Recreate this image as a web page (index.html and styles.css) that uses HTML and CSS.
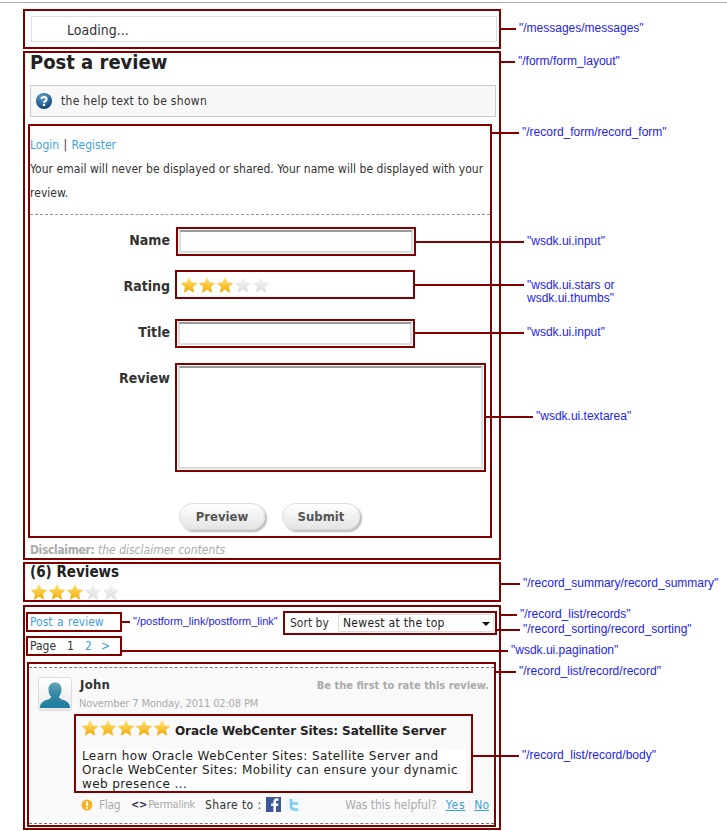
FILE: index.html
```html
<!DOCTYPE html>
<html lang="en">
<head>
  <meta charset="UTF-8">
  <title>Reviews widget layout</title>
  <link rel="stylesheet" href="styles.css">
</head>
<body>

<svg class="sprite" aria-hidden="true">
  <defs>
    <linearGradient id="goldFill" x1="0" y1="0" x2="0" y2="1">
      <stop offset="0" stop-color="#ffe680"/>
      <stop offset="1" stop-color="#f2a900"/>
    </linearGradient>
    <linearGradient id="greyFill" x1="0" y1="0" x2="0" y2="1">
      <stop offset="0" stop-color="#f6f6f6"/>
      <stop offset="1" stop-color="#dcdcdc"/>
    </linearGradient>
    <radialGradient id="helpFill" cx="0.4" cy="0.25" r="0.8">
      <stop offset="0" stop-color="#5aa0d0"/>
      <stop offset="1" stop-color="#0b3f70"/>
    </radialGradient>
    <linearGradient id="avatarFill" x1="0" y1="0" x2="0" y2="1">
      <stop offset="0" stop-color="#6aa5b8"/>
      <stop offset="0.5" stop-color="#2f87a5"/>
      <stop offset="1" stop-color="#1f7d9e"/>
    </linearGradient>
    <symbol id="starOn" viewBox="0 0 18 18">
      <path fill="url(#goldFill)" d="M9 .8L11.470 6.200 17.370 6.880 12.990 10.900 14.170 16.720 9 13.800 3.830 16.720 5.010 10.900 .63 6.880 6.530 6.200z"/>
    </symbol>
    <symbol id="starOff" viewBox="0 0 18 18">
      <path fill="url(#greyFill)" d="M9 .8L11.470 6.200 17.370 6.880 12.990 10.900 14.170 16.720 9 13.800 3.830 16.720 5.010 10.900 .63 6.880 6.530 6.200z"/>
    </symbol>
  </defs>
</svg>

<div class="top-rule"></div>

<div class="page">

  <!-- messages -->
  <div class="anno box-messages">
    <div class="loading">Loading...</div>
    <div class="callout callout-messages"><i></i><span>"/messages/messages"</span></div>
  </div>

  <!-- form layout -->
  <div class="anno box-form">
    <div class="callout callout-form"><i></i><span>"/form/form_layout"</span></div>
    <h1>Post a review</h1>
    <div class="help">
      <svg class="help-icon" viewBox="0 0 16 16">
        <circle cx="8" cy="8" r="8" fill="url(#helpFill)"/>
        <path d="M5.400 6a2.600 2.300 0 1 1 3.800 2.200c-.8.4-1.200.8-1.200 1.600" fill="none" stroke="#fff" stroke-width="2.100"/>
        <rect x="6.900" y="10.800" width="2.200" height="2.200" fill="#fff"/>
      </svg>
      the help text to be shown
    </div>

    <div class="anno box-record-form">
      <div class="callout callout-record-form"><i></i><span>"/record_form/record_form"</span></div>
      <div class="login"><a href="#">Login</a> | <a href="#">Register</a></div>
      <p class="notice">Your email will never be displayed or shared. Your name will be displayed with your review.</p>
      <div class="dash"></div>

      <div class="field field-name">
        <label>Name</label>
        <div class="anno box-input box-input-name">
          <input class="text-input" type="text">
          <div class="callout callout-name"><i></i><span>"wsdk.ui.input"</span></div>
        </div>
      </div>

      <div class="field field-rating">
        <label>Rating</label>
        <div class="anno box-input box-stars">
          <svg class="star"><use href="#starOn"/></svg><svg class="star"><use href="#starOn"/></svg><svg class="star"><use href="#starOn"/></svg><svg class="star"><use href="#starOff"/></svg><svg class="star"><use href="#starOff"/></svg>
          <div class="callout callout-rating"><i></i><span>"wsdk.ui.stars or<br>wsdk.ui.thumbs"</span></div>
        </div>
      </div>

      <div class="field field-title">
        <label>Title</label>
        <div class="anno box-input">
          <input class="text-input" type="text">
          <div class="callout callout-title"><i></i><span>"wsdk.ui.input"</span></div>
        </div>
      </div>

      <div class="field field-review">
        <label>Review</label>
        <div class="anno box-textarea">
          <textarea class="text-area"></textarea>
          <div class="callout callout-review"><i></i><span>"wsdk.ui.textarea"</span></div>
        </div>
      </div>

      <div class="buttons">
        <button class="pill pill-preview">Preview</button>
        <button class="pill pill-submit">Submit</button>
      </div>
    </div>

    <div class="disclaimer"><b>Disclaimer:</b> <em>the disclaimer contents</em></div>
  </div>

  <!-- summary -->
  <div class="anno box-summary">
    <div class="callout callout-summary"><i></i><span>"/record_summary/record_summary"</span></div>
    <h2>(6) Reviews</h2>
    <div class="stars-row"><svg class="star"><use href="#starOn"/></svg><svg class="star"><use href="#starOn"/></svg><svg class="star"><use href="#starOn"/></svg><svg class="star"><use href="#starOff"/></svg><svg class="star"><use href="#starOff"/></svg></div>
  </div>

  <!-- record list -->
  <div class="anno box-records">
    <div class="callout callout-records"><i></i><span>"/record_list/records"</span></div>

    <div class="records-head">
      <div class="head-left">
        <div class="anno box-postlink">
          <a href="#">Post a review</a>
          <div class="callout callout-postlink"><i></i><span>"/postform_link/postform_link"</span></div>
        </div>
        <div class="anno box-pages">
          <span class="page-word">Page</span><span class="page-no">1</span><a href="#">2</a><a href="#">&gt;</a>
          <div class="callout callout-pages"><i></i><span>"wsdk.ui.pagination"</span></div>
        </div>
      </div>
      <div class="anno box-sort">
        <span class="sort-word">Sort by</span>
        <div class="select">Newest at the top<b class="select-arrow"></b></div>
        <div class="callout callout-sort"><i></i><span>"/record_sorting/record_sorting"</span></div>
      </div>
    </div>

    <div class="anno box-record">
      <div class="callout callout-record"><i></i><span>"/record_list/record/record"</span></div>
      <div class="record-frame">
        <div class="record-content">
          <div class="record-top">
            <div class="avatar">
              <svg viewBox="0 0 30 30">
                <path fill="url(#avatarFill)" d="M0 29c0-5 3-7 8-8.500 2-.7 3-1.500 3-3-1.500-1.500-2.500-4-2.500-7C8.500 6 11 3.500 15 3.500s6.500 2.500 6.500 7c0 3-1 5.500-2.500 7 0 1.500 1 2.300 3 3 5 1.500 8 3.500 8 8.500z"/>
              </svg>
            </div>
            <div class="meta">
              <div class="author">John</div>
              <div class="date">November 7 Monday, 2011 02:08 PM</div>
            </div>
            <div class="first-rate">Be the first to rate this review.</div>
          </div>

          <div class="anno box-body">
            <div class="callout callout-body"><i></i><span>"/record_list/record/body"</span></div>
            <div class="body-head">
              <svg class="star"><use href="#starOn"/></svg><svg class="star"><use href="#starOn"/></svg><svg class="star"><use href="#starOn"/></svg><svg class="star"><use href="#starOn"/></svg><svg class="star"><use href="#starOn"/></svg>
              <strong>Oracle WebCenter Sites: Satellite Server</strong>
            </div>
            <p>Learn how Oracle WebCenter Sites: Satellite Server and Oracle WebCenter Sites: Mobility can ensure your dynamic web presence ...</p>
          </div>

          <div class="record-foot">
            <svg class="flag-icon" viewBox="0 0 12 12">
              <circle cx="6" cy="6" r="5.500" fill="#f5b324"/>
              <rect x="5" y="2.500" width="2" height="4.500" fill="#fff"/>
              <rect x="5" y="8" width="2" height="1.800" fill="#fff"/>
            </svg>
            <span class="flag">Flag</span>
            <span class="permalink"><b>&lt;&gt;</b>Permalink</span>
            <span class="share">Share to :</span>
            <svg class="social" viewBox="0 0 15 15">
              <rect width="15" height="15" fill="#3b5998"/>
              <path fill="#fff" d="M10 15V9h2l.4-2.500H10V5c0-.8.3-1.200 1.200-1.200h1.300V1.500C12 1.400 11.400 1.300 10.600 1.300 8.700 1.300 7.400 2.500 7.400 4.700v1.800H5.200V9h2.200v6z"/>
            </svg>
            <svg class="social social-tw" viewBox="0 0 15 15">
              <rect width="15" height="15" rx="3" fill="#eef7fb"/>
              <path fill="none" stroke="#7ccbef" stroke-width="2.600" d="M5 2v6.500c0 2.500 1.500 4 4 4h3M5 6.500h7"/>
            </svg>
            <span class="helpful">Was this helpful?</span>
            <a href="#" class="vote vote-yes">Yes</a>
            <a href="#" class="vote">No</a>
          </div>
        </div>
      </div>
    </div>
  </div>

</div>

</body>
</html>
```

FILE: styles.css
```css
body {
  margin: 0;
  background: #fff;
  font-family: "DejaVu Sans Condensed", "DejaVu Sans", sans-serif;
  font-size: 12px;
  color: #333;
}
a {
  color: #3f9fdc;
  text-decoration: none;
}
.sprite {
  position: absolute;
  width: 0;
  height: 0;
}
.top-rule {
  height: 1px;
  margin-top: 2px;
  background: #aaa;
}
.page {
  width: 478px;
  margin-left: 23px;
  display: flex;
  flex-direction: column;
}

/* dark red annotation frames */
.anno {
  position: relative;
  box-sizing: border-box;
  border: 2px solid #800000;
}
.callout {
  position: absolute;
  left: 100%;
  display: flex;
  align-items: center;
  gap: 3px;
  font-family: "Liberation Sans", Arial, sans-serif;
  font-size: 12px;
  line-height: 13px;
  color: #2222ee;
  white-space: nowrap;
}
.callout i {
  display: block;
  height: 2px;
  background: #800000;
}
.callout-messages { top: 11px; }
.callout-messages i { width: 17px; }
.callout-form { top: 2px; }
.callout-form i { width: 16px; }
.callout-record-form { top: 0; }
.callout-record-form i { width: 29px; }
.callout-name { top: 6px; }
.callout-name i { width: 110px; }
.callout-rating { top: 7px; align-items: flex-start; }
.callout-rating i { width: 111px; margin-top: 5px; }
.callout-title { top: 5px; }
.callout-title i { width: 111px; }
.callout-review { top: 45px; }
.callout-review i { width: 49px; }
.callout-summary { top: 13px; }
.callout-summary i { width: 21px; }
.callout-records { top: 1px; }
.callout-records i { width: 18px; }
.callout-sort { top: 10px; }
.callout-sort i { width: 25px; }
.callout-pages { top: 6px; }
.callout-pages i { width: 388px; }
.callout-record { top: 1px; }
.callout-record i { width: 22px; }
.callout-body { top: 33px; }
.callout-body i { width: 48px; }
.callout-postlink { top: 1px; font-size: 11px; }
.callout-postlink i { width: 10px; }

/* messages */
.box-messages {
  height: 40px;
  margin-top: 6px;
  padding: 5px 2px 0 6px;
}
.loading {
  height: 26px;
  box-sizing: border-box;
  border: 1px solid #dde0e0;
  padding-left: 35px;
  font-size: 14px;
  line-height: 26px;
}

/* form */
.box-form {
  height: 509px;
  margin-top: 2px;
  padding: 0 3px 0 5px;
}
h1 {
  margin: 0 0 14px;
  font-size: 20px;
  line-height: 18px;
  color: #222;
}
.help {
  display: flex;
  align-items: center;
  gap: 9px;
  height: 32px;
  box-sizing: border-box;
  border: 1px solid #ccc;
  background: #f8f8f8;
  padding-left: 5px;
  margin-bottom: 7px;
  letter-spacing: .3px;
}
.help-icon {
  width: 16px;
  height: 16px;
}
.box-record-form {
  width: 464px;
  height: 414px;
  margin-left: -2px;
  padding: 7px 6px 0 0;
}
.login, .notice {
  line-height: 24px;
}
.login {
  word-spacing: 1px;
}
.notice {
  margin: 0;
  letter-spacing: .04px;
}
.dash {
  margin: 9px -6px 12px 0;
  border-top: 1px dashed #999;
}
.field {
  display: flex;
  align-items: center;
  gap: 5px;
  margin-right: -6px;
}
.field label {
  width: 140px;
  flex-shrink: 0;
  text-align: right;
  font-size: 14px;
  font-weight: bold;
}
.field-name { margin-bottom: 14px; }
.field-name label, .field-title label { padding-bottom: 3px; }
.field-rating { margin-bottom: 20px; }
.field-rating label { padding-top: 2px; }
.field-title { margin-bottom: 15px; }
.field-review {
  align-items: flex-start;
  margin-bottom: 31px;
}
.field-review label { padding-top: 7px; }
.box-input {
  width: 240px;
  height: 29px;
}
.box-input-name { margin-left: 1px; }
.box-stars {
  padding: 4px 0 0 3px;
}
.star {
  width: 18px;
  height: 18px;
  display: block;
  float: left;
}
.text-input, .text-area {
  display: block;
  box-sizing: border-box;
  margin: 1px;
  border: 2px solid #ddd;
  border-top-color: #999;
  background: #fff;
  padding: 0;
}
.text-input {
  width: 234px;
  height: 23px;
}
.box-textarea {
  width: 311px;
  height: 109px;
}
.text-area {
  width: 305px;
  height: 103px;
  resize: none;
}
.buttons {
  display: flex;
  gap: 17px;
  padding-left: 149px;
}
.pill {
  height: 27px;
  box-sizing: border-box;
  border: 1px solid #ddd;
  border-radius: 14px;
  background: linear-gradient(#fff, #e4e4e4);
  box-shadow: 2px 2px 2px #bbb;
  font-family: inherit;
  font-size: 13px;
  font-weight: bold;
  color: #555;
  padding: 0;
}
.pill-preview { width: 86px; }
.pill-submit { width: 78px; }
.disclaimer {
  margin-top: 4px;
  line-height: 16px;
  color: #aaa;
}
.disclaimer b { letter-spacing: -.35px; }

/* summary */
.box-summary {
  height: 40px;
  margin-top: 2px;
  padding-left: 5px;
}
h2 {
  margin: 0;
  font-size: 15px;
  line-height: 16px;
  color: #222;
}
.stars-row {
  padding-top: 3px;
}

/* record list */
.box-records {
  height: 225px;
  margin-top: 3px;
}
.records-head {
  display: flex;
  justify-content: space-between;
  padding: 4px 2px 0 1px;
  margin-bottom: 6px;
}
.head-left {
  display: flex;
  flex-direction: column;
  gap: 4px;
  padding-top: 1px;
}
.box-postlink {
  width: 96px;
  height: 20px;
  padding-left: 2px;
  line-height: 16px;
  word-spacing: 1px;
}
.box-pages {
  width: 96px;
  height: 20px;
  padding-left: 2px;
  line-height: 16px;
  display: flex;
}
.page-word { width: 37px; }
.page-no { width: 18px; }
.box-pages a { width: 16px; }
.box-sort {
  display: flex;
  align-items: center;
  width: 214px;
  height: 24px;
  padding-left: 5px;
}
.sort-word { width: 48px; }
.select {
  position: relative;
  width: 156px;
  height: 18px;
  box-sizing: border-box;
  border: 1px solid #ddd;
  border-radius: 2px;
  padding-left: 4px;
  line-height: 17px;
  letter-spacing: .3px;
  color: #222;
}
.select-arrow {
  position: absolute;
  right: 3px;
  top: 7px;
  border: 4px solid transparent;
  border-top: 4px solid #111;
  border-bottom: 0;
}
.box-record {
  width: 469px;
  height: 165px;
  margin-left: 2px;
  padding-top: 3px;
}
.record-frame {
  height: 157px;
  box-sizing: border-box;
  border-top: 1px dashed #777;
  border-bottom: 1px dashed #777;
}
.record-content {
  height: 150px;
  box-sizing: border-box;
  background: #f9f9f9;
  padding-top: 9px;
}
.record-top {
  display: flex;
  height: 34px;
  padding: 0 5px 0 9px;
}
.avatar {
  width: 34px;
  height: 34px;
  box-sizing: border-box;
  border: 1px solid #ddd;
  border-radius: 3px;
  background: linear-gradient(#fff, #e8e8e8);
  padding: 1px;
}
.avatar svg {
  display: block;
  width: 30px;
  height: 30px;
}
.meta {
  margin-left: 7px;
  flex: 1;
}
.author {
  margin-left: 1px;
  font-size: 13px;
  font-weight: bold;
  line-height: 16px;
  letter-spacing: .3px;
}
.date {
  margin-top: 2px;
  font-size: 11px;
  line-height: 18px;
  letter-spacing: -.15px;
  color: #aaa;
}
.first-rate {
  font-size: 11px;
  font-weight: bold;
  line-height: 18px;
  color: #aaa;
}
.box-body {
  width: 399px;
  height: 79px;
  margin: 3px 0 0 45px;
  padding: 2px 5px 0;
  font-family: "DejaVu Sans", sans-serif;
  color: #222;
}
.body-head {
  display: flex;
  align-items: center;
  height: 20px;
}
.body-head strong {
  margin-left: 4px;
  padding-top: 5px;
  font-size: 12px;
  letter-spacing: -.1px;
}
.box-body p {
  margin: 11px 0 0 1px;
  background: #fff;
  font-size: 12px;
  line-height: 14px;
  letter-spacing: .4px;
}
.record-foot {
  display: flex;
  align-items: center;
  height: 15px;
  margin-top: 4px;
  padding: 0 5px 0 52px;
  color: #aaa;
}
.flag-icon {
  width: 12px;
  height: 12px;
  margin-right: 6px;
}
.flag {
  width: 32px;
  letter-spacing: -.4px;
}
.permalink {
  width: 74px;
  font-size: 11px;
  letter-spacing: -.2px;
}
.permalink b {
  margin-right: 1px;
  color: #336;
}
.share {
  width: 61px;
  letter-spacing: .4px;
  color: #333;
}
.social {
  width: 15px;
  height: 15px;
}
.social-tw { margin-left: 5px; }
.helpful { margin-left: auto; }
.vote {
  margin-left: 9px;
  text-decoration: underline;
}
.vote-yes { letter-spacing: .8px; }
```
